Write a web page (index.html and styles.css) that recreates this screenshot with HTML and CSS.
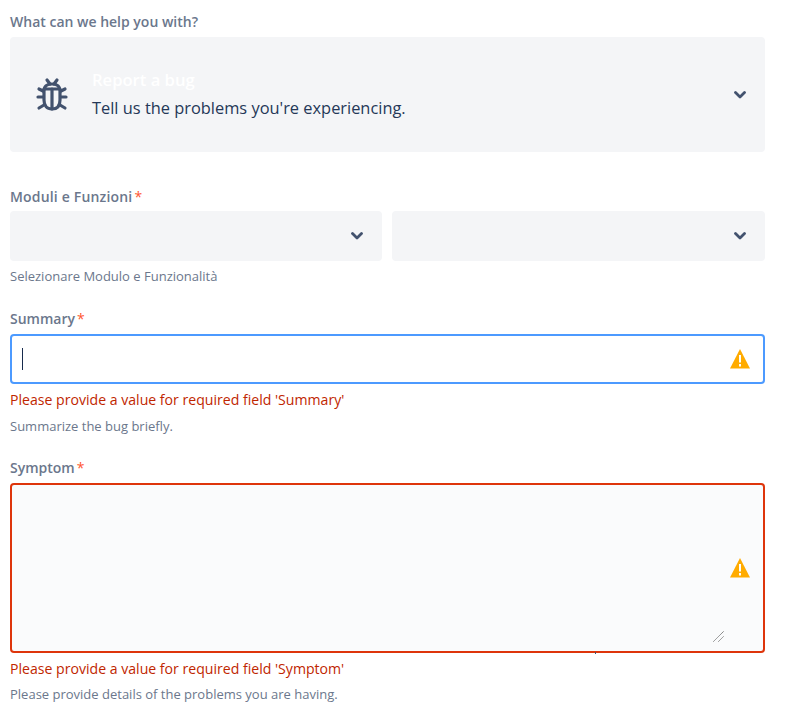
FILE: index.html
```html
<!DOCTYPE html>
<html lang="en">
<head>
<meta charset="utf-8">
<title>Report a bug</title>
<link rel="stylesheet" href="styles.css">
</head>
<body>
<form class="form">
  <div class="label label-first">What can we help you with?</div>
  <div class="type-card">
    <svg class="bug" width="32" height="36" viewBox="0 0 32 36" fill="none">
      <g stroke="#42526e" stroke-width="3.200" stroke-linecap="round">
        <path d="M11 3l3 4M21 3l-3 4"/>
        <path d="M3 12l4 2M29 12l-4 2M2 20h5M30 20h-5M3 31l5-3M29 31l-5-3"/>
        <path d="M16 12v20"/>
        <path d="M8 14c0-5 3-7 8-7s8 2 8 7v9c0 6-3 9-8 9s-8-3-8-9z"/>
        <path d="M8 12h16"/>
      </g>
    </svg>
    <div class="type-text">
      <div class="type-title">Report a bug</div>
      <div class="type-desc">Tell us the problems you're experiencing.</div>
    </div>
    <svg class="chev" width="12" height="8" viewBox="0 0 12 8"><path d="M1.500 1.500L6 6l4.500-4.500" fill="none" stroke="#42526e" stroke-width="2.800" stroke-linecap="round" stroke-linejoin="round"/></svg>
  </div>

  <div class="label label-moduli">Moduli e Funzioni<span class="req">*</span></div>
  <div class="selects">
    <div class="select"><svg class="chev" width="12" height="8" viewBox="0 0 12 8"><path d="M1.500 1.500L6 6l4.500-4.500" fill="none" stroke="#42526e" stroke-width="2.800" stroke-linecap="round" stroke-linejoin="round"/></svg></div>
    <div class="select"><svg class="chev" width="12" height="8" viewBox="0 0 12 8"><path d="M1.500 1.500L6 6l4.500-4.500" fill="none" stroke="#42526e" stroke-width="2.800" stroke-linecap="round" stroke-linejoin="round"/></svg></div>
  </div>
  <div class="help help-moduli">Selezionare Modulo e Funzionalità</div>

  <div class="label label-summary">Summary<span class="req">*</span></div>
  <div class="input">
    <span class="caret"></span>
    <svg class="warn" width="20" height="20" viewBox="0 0 20 20"><path d="M10 0L20 19.500H0z" fill="#ffab00"/><path d="M10 6v7.500M10 15v2.500" stroke="#fff" stroke-width="2" fill="none"/></svg>
  </div>
  <div class="error">Please provide a value for required field 'Summary'</div>
  <div class="help help-summary">Summarize the bug briefly.</div>

  <div class="label label-symptom">Symptom<span class="req">*</span></div>
  <div class="textarea">
    <svg class="warn" width="20" height="20" viewBox="0 0 20 20"><path d="M10 0L20 19.500H0z" fill="#ffab00"/><path d="M10 6v7.500M10 15v2.500" stroke="#fff" stroke-width="2" fill="none"/></svg>
    <svg class="grip" width="11" height="11" viewBox="0 0 11 11"><path d="M0.500 10.500L10.500 0.500M5.500 10.500L10.500 5.500" stroke="#555" stroke-width="1" stroke-dasharray="1 0.500" fill="none"/></svg>
    <span class="speck"></span>
  </div>
  <div class="error">Please provide a value for required field 'Symptom'</div>
  <div class="help help-symptom">Please provide details of the problems you are having.</div>
</form>
</body>
</html>
```
FILE: styles.css
```css
* { box-sizing: border-box; }
html, body { margin: 0; background: #fff; }
body {
  width: 802px;
  height: 727px;
  overflow: hidden;
  font-family: "Open Sans", "Noto Sans", sans-serif;
  color: #172b4d;
}
.form { width: 765px; margin-left: 10px; padding-top: 12px; }
.form > * { width: 755px; }

.label {
  font-size: 14px;
  line-height: 20px;
  font-weight: 600;
  color: #6b778c;
}
.req { color: #ff5630; margin-left: 2px; font-weight: 400; }
.label-first { margin-bottom: 5px; }
.label-moduli { margin-top: 35px; margin-bottom: 4px; letter-spacing: 0.18px; }
.label-summary { margin-top: 25px; margin-bottom: 5px; }
.label-symptom { margin-top: 24px; margin-bottom: 5px; }

.type-card {
  height: 115px;
  background: #f4f5f7;
  border-radius: 4px;
  display: flex;
  align-items: center;
  padding: 0 19px 0 26px;
}
.bug { flex: none; margin-top: 1px; }
.type-text { flex: 1; margin-left: 24px; }
.type-title { font-size: 16.600px; line-height: 24px; font-weight: 600; color: #fff; margin-top: -2px; }
.type-desc { font-size: 16.400px; line-height: 24px; margin-top: 4px; color: #253858; }
.chev { flex: none; display: block; }

.selects { display: grid; grid-template-columns: 372px 373px; gap: 10px; }
.select {
  height: 50px;
  background: #f4f5f7;
  border-radius: 4px;
  display: flex;
  align-items: center;
  justify-content: flex-end;
  padding-right: 19px;
}

.help { font-size: 13px; line-height: 16px; color: #6b778c; }
.help-moduli { margin-top: 7px; }
.help-summary { margin-top: 8px; }
.help-symptom { margin-top: 7px; }

.input, .textarea {
  border-style: solid;
  border-width: 2px;
  border-radius: 4px;
  display: flex;
  align-items: center;
  justify-content: flex-end;
  padding-right: 13px;
  position: relative;
}
.input { height: 50px; border-color: #4c9aff; background: #fff; }
.textarea { height: 170px; border-color: #de350b; background: #fafbfc; }

.caret {
  position: absolute;
  left: 10px;
  top: 12px;
  width: 1px;
  height: 22px;
  background: #172b4d;
}
.warn { flex: none; display: block; }
.grip { position: absolute; right: 39px; bottom: 9px; }
.speck {
  position: absolute;
  left: 583px;
  bottom: -3px;
  width: 1px;
  height: 2px;
  background: #42526e;
}

.error {
  font-size: 14.100px;
  line-height: 20px;
  color: #bf2600;
  margin-top: 6px;
}
```
